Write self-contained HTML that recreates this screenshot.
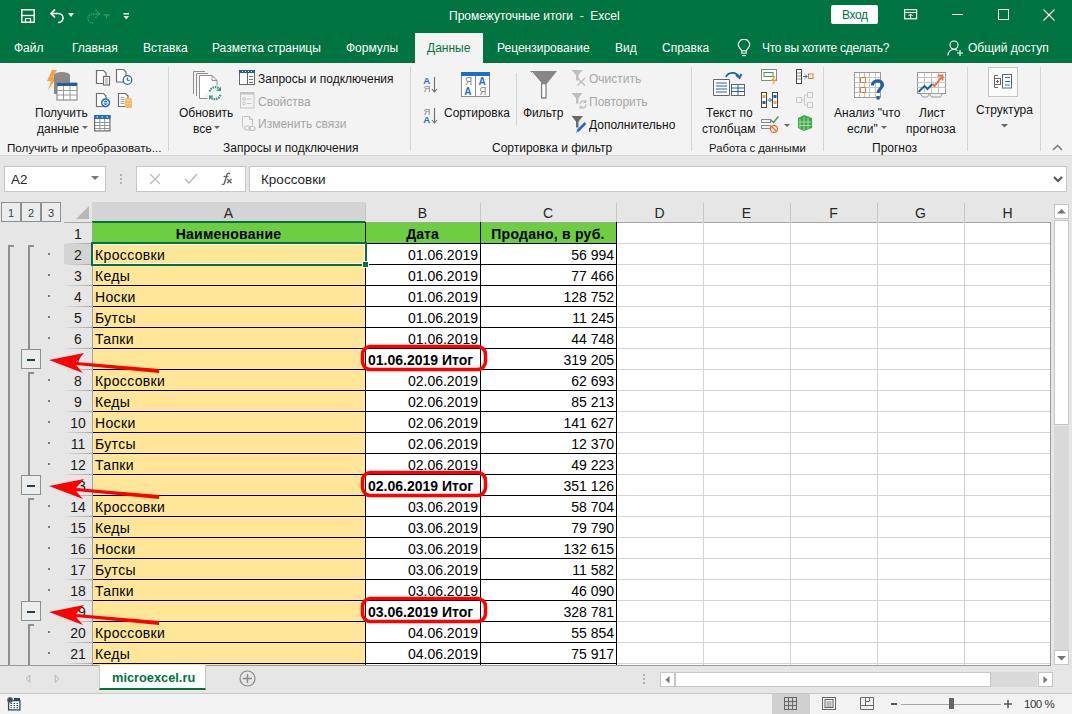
<!DOCTYPE html>
<html><head><meta charset="utf-8">
<style>
*{box-sizing:border-box}
html,body{margin:0;padding:0;width:1072px;height:714px;overflow:hidden;background:#e6e6e6;font-family:"Liberation Sans",sans-serif}
.a{position:absolute}
.t{position:absolute;white-space:pre;font-size:12px;line-height:14px;color:#141414}
#title{left:0;top:0;width:1072px;height:63px;background:#007440}
.tab{position:absolute;top:41px;white-space:pre;font-size:12px;line-height:15px;color:#fff}
#ribbon{left:0;top:63px;width:1072px;height:93px;background:#f3f3f3;border-bottom:1px solid #d6d6d6}
.sep{position:absolute;top:67px;width:1px;height:84px;background:#d4d4d4}
.gl{position:absolute;height:1px;background:#d4d4d4}
.gv{position:absolute;width:1px;background:#d4d4d4}
.bl{position:absolute;height:1px;background:#000}
.bv{position:absolute;width:1px;background:#000}
.ct{position:absolute;white-space:pre;font-size:14px;line-height:20px;height:20px;color:#000}
.ct.b{font-weight:bold}
.ct.r{text-align:right}
.rhn{position:absolute;left:64px;width:28px;height:20px;font-size:14px;line-height:20px;text-align:center;color:#1a1a1a}
.rhl{position:absolute;left:64px;width:28px;height:1px;background:linear-gradient(to right,#e6e6e6,#c8c8c8 40%,#a8a8a8)}
.obar{position:absolute;width:2px;background:#8a9190}
.odot{position:absolute;left:48px;width:2px;height:2px;background:#7a7a7a}
.obtn{position:absolute;left:21px;width:20px;height:20px;border:1px solid #8a9190;background:#ececec}
.obtn i{position:absolute;left:5px;top:9px;width:8px;height:2px;background:#1f3f4f}
.ch{position:absolute;top:203px;height:20px;font-size:14px;line-height:20px;text-align:center;color:#262626}
.chs{position:absolute;top:203px;width:1px;height:19px;background:#c6c6c6}
</style></head><body>
<!-- title bar + tabs -->
<div id="title" class="a"></div>
<!-- QAT icons -->
<svg class="a" style="left:20px;top:8px" width="16" height="16" viewBox="0 0 16 16"><path d="M1.75 1.75h12.5v12.5h-12.5z" fill="none" stroke="#fff" stroke-width="1.5"/><path d="M2 7.5h12" stroke="#fff" stroke-width="1.3"/><path d="M5.5 14v-3.5h5v3.5" fill="none" stroke="#fff" stroke-width="1.2"/></svg>
<svg class="a" style="left:49px;top:7px" width="18" height="17" viewBox="0 0 18 17"><path d="M2.5 6.5h7a4.5 4.5 0 0 1 0 9h-0.5" fill="none" stroke="#fff" stroke-width="1.7"/><path d="M6 2.5l-4 4 4 4" fill="none" stroke="#fff" stroke-width="1.7"/></svg>
<svg class="a" style="left:68px;top:13px" width="7" height="5"><path d="M0 0h6l-3 4z" fill="#fff"/></svg>
<svg class="a" style="left:84px;top:8px" width="18" height="16" viewBox="0 0 18 16"><path d="M15.5 6h-7a4.5 4.5 0 0 0 0 9h0.5" fill="none" stroke="#3a9e7a" stroke-width="1.3" stroke-dasharray="1.5 1"/><path d="M11.5 2l4 4-4 4" fill="none" stroke="#3a9e7a" stroke-width="1.3" stroke-dasharray="1.5 1"/></svg>
<svg class="a" style="left:103px;top:14px" width="7" height="5"><path d="M0.5 0.8h6M3.5 0.8v3.5" stroke="#3a9e7a" stroke-width="1.2"/></svg>
<svg class="a" style="left:122px;top:12px" width="8" height="9"><rect x="1.5" y="1" width="5.5" height="1.5" fill="#fff"/><path d="M1.5 4h5.5l-2.75 3.5z" fill="#fff"/></svg>
<div class="t" style="left:449px;top:9px;color:#fff;font-size:12px">Промежуточные итоги  -  Excel</div>
<div class="a" style="left:831px;top:5px;width:47px;height:19px;background:#fff;border-radius:2px"></div>
<div class="t" style="left:842px;top:8px;color:#007440;letter-spacing:-0.4px">Вход</div>
<svg class="a" style="left:904px;top:9px" width="14" height="11" viewBox="0 0 14 11"><rect x="0.6" y="0.6" width="12" height="9.2" fill="none" stroke="#fff" stroke-width="1.2"/><path d="M0.6 3.5h12" stroke="#fff" stroke-width="1.1"/><path d="M6.6 10V5M4.6 7l2-2 2 2" fill="none" stroke="#fff" stroke-width="1"/></svg>
<div class="a" style="left:952px;top:14px;width:11px;height:1px;background:#fff"></div>
<div class="a" style="left:998px;top:9px;width:11px;height:11px;border:1px solid #fff"></div>
<svg class="a" style="left:1043px;top:9px" width="12" height="12"><path d="M0.5 0.5l11 11M11.5 0.5l-11 11" stroke="#fff" stroke-width="1.1"/></svg>

<div class="a" style="left:415px;top:33px;width:68px;height:30px;background:#f3f3f3"></div>
<div class="tab" style="left:14px">Файл</div>
<div class="tab" style="left:72px">Главная</div>
<div class="tab" style="left:143px">Вставка</div>
<div class="tab" style="left:212px">Разметка страницы</div>
<div class="tab" style="left:346px">Формулы</div>
<div class="tab" style="left:427px;color:#007440">Данные</div>
<div class="tab" style="left:497px">Рецензирование</div>
<div class="tab" style="left:615px">Вид</div>
<div class="tab" style="left:662px">Справка</div>
<svg class="a" style="left:737px;top:39px" width="14" height="18" viewBox="0 0 14 18"><path d="M4.6 11.8C4.2 9.8 1.3 8.8 1.3 5.8a5.7 5.7 0 0 1 11.4 0c0 3-2.9 4-3.3 6z" fill="none" stroke="#fff" stroke-width="1.1"/><path d="M4.8 11.8v2.4h4.4v-2.4" fill="none" stroke="#fff" stroke-width="1.1"/><path d="M5 16.6h4" stroke="#fff" stroke-width="1.1"/></svg>
<div class="tab" style="left:762px;letter-spacing:-0.25px">Что вы хотите сделать?</div>
<svg class="a" style="left:947px;top:40px" width="17" height="16" viewBox="0 0 17 16"><circle cx="7" cy="5" r="4" fill="none" stroke="#fff" stroke-width="1.1"/><path d="M0.8 15.5c0.5-3.5 3-6 6.2-6 1.5 0 2.5 0.4 3.5 1" fill="none" stroke="#fff" stroke-width="1.1"/><path d="M13 10v6M10 13h6" stroke="#fff" stroke-width="1.1"/></svg>
<div class="tab" style="left:968px">Общий доступ</div>

<!-- ribbon -->
<div id="ribbon" class="a"></div>
<div class="sep" style="left:168px"></div>
<div class="sep" style="left:410px"></div>
<div class="sep" style="left:691px"></div>
<div class="sep" style="left:823px"></div>
<div class="sep" style="left:967px"></div>
<div class="sep" style="left:1040px"></div>
<div class="a" style="left:516px;top:73px;width:1px;height:53px;background:#d4d4d4"></div>

<!-- group labels -->
<div class="t" style="left:7px;top:141px;font-size:11.65px">Получить и преобразовать...</div>
<div class="t" style="left:223px;top:141px">Запросы и подключения</div>
<div class="t" style="left:492px;top:141px">Сортировка и фильтр</div>
<div class="t" style="left:709px;top:141px;font-size:11.3px">Работа с данными</div>
<div class="t" style="left:872px;top:141px">Прогноз</div>

<!-- group 1 -->
<svg class="a" style="left:44px;top:68px" width="36" height="34" viewBox="0 0 36 34"><path d="M8 2h5l-4 7h4L4 22l3-9H3z" fill="#f7a23a"/><ellipse cx="18" cy="7" rx="8" ry="3" fill="#8a8a8a"/><rect x="10" y="7" width="16" height="19" fill="#8a8a8a"/><rect x="13" y="15" width="20" height="17" fill="#fff" stroke="#7a7a7a"/><rect x="13" y="15" width="20" height="3" fill="#1e5fa8"/><path d="M13 22.5h20M13 27h20M19.5 18v14M26 18v14" stroke="#9a9a9a"/></svg>
<div class="t" style="left:35px;top:106px">Получить</div>
<div class="t" style="left:37px;top:122px">данные</div>
<svg class="a" style="left:82px;top:126px" width="6" height="4"><path d="M0 0h6l-3 3z" fill="#666"/></svg>
<svg class="a" style="left:95px;top:69px" width="16" height="17" viewBox="0 0 16 17"><path d="M1.5 1.5h7l2.5 2.5v10.5h-9.5z" fill="#fff" stroke="#6d6d6d" stroke-width="1.2"/><rect x="8.5" y="7.5" width="6" height="8.5" fill="#fff" stroke="#6d6d6d" stroke-width="1.2"/><path d="M10 10h3M10 12h3M10 14h3" stroke="#8a8a8a" stroke-width="0.9"/></svg>
<svg class="a" style="left:115px;top:68px" width="18" height="17" viewBox="0 0 18 17"><path d="M1.5 1.5h7l2.5 2.5v10h-9.5z" fill="#fff" stroke="#6d6d6d" stroke-width="1.2"/><circle cx="12.5" cy="12" r="4.3" fill="#fff" stroke="#1e72c8" stroke-width="1.3"/><path d="M12.3 9.5v2.8h2.2" fill="none" stroke="#444" stroke-width="1"/></svg>
<svg class="a" style="left:95px;top:92px" width="18" height="17" viewBox="0 0 18 17"><path d="M1.5 1.5h7l2.5 2.5v10.5h-9.5z" fill="#fff" stroke="#6d6d6d" stroke-width="1.2"/><circle cx="10.6" cy="10.8" r="4.6" fill="#1e6fc4"/><circle cx="10.6" cy="10.8" r="2.6" fill="none" stroke="#fff" stroke-width="1"/><path d="M7.5 10.8h6.2" stroke="#fff" stroke-width="1"/></svg>
<svg class="a" style="left:117px;top:92px" width="16" height="17" viewBox="0 0 16 17"><path d="M1.5 1.5h7l2.5 2.5v10.5h-9.5z" fill="#fff" stroke="#6d6d6d" stroke-width="1.2"/><path d="M3.5 5.5h4M3.5 7.5h4M3.5 9.5h4M3.5 11.5h4" stroke="#999" stroke-width="0.9"/><rect x="8" y="6" width="7" height="10" rx="1.5" fill="#f9b862"/><path d="M8.5 8.5h6M8.5 11.5h6" stroke="#fcd9a8" stroke-width="0.8"/></svg>
<svg class="a" style="left:94px;top:115px" width="17" height="17" viewBox="0 0 17 17"><rect x="0.6" y="0.6" width="15.3" height="15.3" fill="#fff" stroke="#6d6d6d" stroke-width="1.2"/><rect x="0" y="0" width="16.5" height="4" fill="#1e6fc4"/><path d="M2.5 2h1.5M7.5 2h1.5M12.5 2h1.5" stroke="#fff" stroke-width="1"/><path d="M1 7.5h15M1 10.5h15M1 13.5h15M5.8 4v12M10.7 4v12" stroke="#8a8a8a" stroke-width="0.9"/></svg>

<!-- group 2 -->
<svg class="a" style="left:192px;top:70px" width="32" height="32" viewBox="0 0 32 32"><path d="M1.5 24V1.5H13" fill="none" stroke="#8f8f8f"/><path d="M4.5 26V3.5H16" fill="none" stroke="#8f8f8f"/><path d="M7.5 28.5V5.5H20l5 5v5" fill="#fff" stroke="#8f8f8f"/><path d="M7.5 28.5h8" stroke="#8f8f8f"/><path d="M20 5.5v5h5" fill="none" stroke="#8f8f8f"/><path d="M17.6 21.5a5.8 5.8 0 0 1 10.2-2.2" fill="none" stroke="#3a9a80" stroke-width="2.2" stroke-dasharray="1.6 0.8"/><path d="M28.4 24.8a5.8 5.8 0 0 1-10.2 2.2" fill="none" stroke="#3a9a80" stroke-width="2.2" stroke-dasharray="1.6 0.8"/><path d="M29 16.5v4.5h-4.5z" fill="#3a9a80"/><path d="M17 30v-4.5h4.5z" fill="#3a9a80"/></svg>
<div class="t" style="left:179px;top:106px">Обновить</div>
<div class="t" style="left:193px;top:122px">все</div>
<svg class="a" style="left:214px;top:126px" width="6" height="4"><path d="M0 0h6l-3 3z" fill="#666"/></svg>
<svg class="a" style="left:239px;top:70px" width="17" height="16" viewBox="0 0 17 16"><rect x="0.5" y="0.5" width="15" height="14" fill="#fff" stroke="#666"/><rect x="0" y="0" width="16" height="3" fill="#1e5fa8"/><path d="M3 1.5h1M6 1.5h1M9 1.5h1M12 1.5h1" stroke="#fff"/><path d="M8.5 3v11.5" stroke="#666"/><path d="M10 6.5h4M10 9.5h4M10 12.5h4" stroke="#777"/></svg>
<div class="t" style="left:258px;top:72px">Запросы и подключения</div>
<svg class="a" style="left:239px;top:92px" width="16" height="17" viewBox="0 0 16 17"><rect x="1.5" y="0.5" width="13.5" height="15.5" fill="none" stroke="#c4c4c4"/><rect x="1.5" y="0.5" width="13.5" height="2" fill="#c4c4c4"/><circle cx="5" cy="7" r="1.4" fill="none" stroke="#c4c4c4"/><circle cx="5" cy="11.5" r="1.4" fill="none" stroke="#c4c4c4"/><path d="M8 7h4.5M8 11.5h4.5" stroke="#c4c4c4"/></svg>
<div class="t" style="left:258px;top:95px;color:#a6a6a6">Свойства</div>
<svg class="a" style="left:241px;top:115px" width="16" height="17" viewBox="0 0 16 17"><path d="M1.5 12.5V1.5h7l3 3v6" fill="none" stroke="#c4c4c4"/><path d="M8.5 1.5v3h3" fill="none" stroke="#c4c4c4"/><rect x="3.5" y="11" width="6" height="4" rx="2" fill="none" stroke="#c4c4c4" stroke-width="1.2"/><rect x="8" y="11.5" width="6" height="4" rx="2" fill="none" stroke="#c4c4c4" stroke-width="1.2"/></svg>
<div class="t" style="left:258px;top:117px;color:#a6a6a6">Изменить связи</div>

<!-- group 3 -->
<svg class="a" style="left:422px;top:75px" width="16" height="19" viewBox="0 0 16 19"><text x="1.3" y="9" font-family="Liberation Sans" font-weight="bold" font-size="9.6" fill="#1e6fc4">A</text><text x="1.5" y="16.8" font-family="Liberation Sans" font-size="9.6" fill="#8a8a8a">Я</text><path d="M12.5 2v15M10 14l2.5 3 2.5-3" fill="none" stroke="#6d6d6d" stroke-width="1.1"/></svg>
<svg class="a" style="left:422px;top:106px" width="16" height="19" viewBox="0 0 16 19"><text x="1.5" y="8.6" font-family="Liberation Sans" font-size="9.6" fill="#8a8a8a">Я</text><text x="1.3" y="16.8" font-family="Liberation Sans" font-weight="bold" font-size="9.6" fill="#1e6fc4">A</text><path d="M12.5 2v15M10 14l2.5 3 2.5-3" fill="none" stroke="#6d6d6d" stroke-width="1.1"/></svg>
<svg class="a" style="left:461px;top:72px" width="30" height="26" viewBox="0 0 30 26"><rect x="0.5" y="0.5" width="28" height="24" fill="#fff" stroke="#8a8a8a"/><rect x="0" y="0" width="29" height="4" fill="#1e6fc4"/><path d="M14.5 4v20.5" stroke="#8a8a8a"/><text x="4" y="13" font-family="Liberation Sans" font-size="10" fill="#8a8a8a">Я</text><text x="3.3" y="22.5" font-family="Liberation Sans" font-weight="bold" font-size="10" fill="#1e6fc4">A</text><text x="17.5" y="13" font-family="Liberation Sans" font-weight="bold" font-size="10" fill="#1e6fc4">A</text><text x="18.2" y="22.5" font-family="Liberation Sans" font-size="10" fill="#8a8a8a">Я</text></svg>
<div class="t" style="left:444px;top:106px">Сортировка</div>
<svg class="a" style="left:529px;top:70px" width="30" height="29" viewBox="0 0 30 29"><path d="M1 1h27l-10 12.5h-5z" fill="#868686"/><path d="M3 2l9.5 12" stroke="#fff" stroke-width="1"/><path d="M12.6 13.5h4.4v14.5h-4.4z" fill="#fff" stroke="#808080" stroke-width="1.3"/></svg>
<div class="t" style="left:523px;top:106px">Фильтр</div>
<svg class="a" style="left:571px;top:69px" width="18" height="18" viewBox="0 0 18 18"><path d="M0.5 1h11l-4 5v5.5h-2.5v-5.5z" fill="#bdbdbd"/><path d="M6.5 9l7.5 7.5M14 9l-7.5 7.5" stroke="#bdbdbd" stroke-width="1.3"/></svg>
<div class="t" style="left:589px;top:72px;color:#a6a6a6">Очистить</div>
<svg class="a" style="left:571px;top:92px" width="18" height="18" viewBox="0 0 18 18"><path d="M0.5 1h11l-4 5v5.5h-2.5v-5.5z" fill="#bdbdbd"/><path d="M9 12.5a3.5 3.5 0 0 1 6-2.5M15 12.5a3.5 3.5 0 0 1-6 2.5" fill="none" stroke="#bdbdbd" stroke-width="1.3"/><path d="M15 8v2.5h-2.5M9 17v-2.5h2.5" fill="none" stroke="#bdbdbd" stroke-width="1"/></svg>
<div class="t" style="left:589px;top:95px;color:#a6a6a6">Повторить</div>
<svg class="a" style="left:571px;top:115px" width="18" height="18" viewBox="0 0 18 18"><path d="M0.5 1h11.5l-4.5 5.5v6h-2.5v-6z" fill="#6b6b66"/><path d="M6.5 16l8-8" stroke="#1e6fc4" stroke-width="2.6"/><path d="M5.5 17.5l1-2" stroke="#1e6fc4" stroke-width="1"/></svg>
<div class="t" style="left:589px;top:118px">Дополнительно</div>

<!-- group 4 -->
<svg class="a" style="left:712px;top:70px" width="34" height="27" viewBox="0 0 34 27"><path d="M1.5 9.5h16v16h-16z" fill="#fff" stroke="#666"/><path d="M4 13h11M4 16h11M4 19h11M4 22h11" stroke="#1e5fa8"/><rect x="19.5" y="14.5" width="13" height="11" fill="#fff" stroke="#666"/><path d="M19.5 18h13M19.5 21.5h13M26 14.5v11" stroke="#1e5fa8"/><path d="M14 7c2-5 10-6 13 0" fill="none" stroke="#1e5fa8" stroke-width="1.8"/><path d="M24 5l3.5 3 2-4" fill="none" stroke="#1e5fa8" stroke-width="1.8"/></svg>
<div class="t" style="left:706px;top:106px">Текст по</div>
<div class="t" style="left:702px;top:122px">столбцам</div>
<svg class="a" style="left:761px;top:69px" width="18" height="16" viewBox="0 0 18 16"><rect x="0.5" y="0.5" width="15" height="11" fill="#fff" stroke="#888"/><rect x="3" y="3.5" width="9" height="4" fill="#fff" stroke="#3f9a5a"/><path d="M14 7l-3 4h3l-2 4" fill="none" stroke="#f7a23a" stroke-width="1.3"/></svg>
<svg class="a" style="left:761px;top:92px" width="18" height="17" viewBox="0 0 18 17"><rect x="0.5" y="0.5" width="5" height="15" fill="#fff" stroke="#444"/><rect x="11.5" y="0.5" width="5" height="15" fill="#fff" stroke="#444"/><rect x="1.5" y="3" width="3" height="3" fill="#f7a23a"/><rect x="1.5" y="9" width="3" height="3" fill="#1e5fa8"/><rect x="12.5" y="3" width="3" height="3" fill="#1e5fa8"/><rect x="12.5" y="9" width="3" height="3" fill="#f7a23a"/><path d="M6.5 8h4M8.5 6l2 2-2 2" fill="none" stroke="#1e72c8"/></svg>
<svg class="a" style="left:761px;top:115px" width="18" height="18" viewBox="0 0 18 18"><rect x="0.5" y="4.5" width="9" height="3" fill="none" stroke="#888"/><rect x="0.5" y="10.5" width="9" height="3" fill="none" stroke="#888"/><path d="M10 5l2.5 2.5 5-6" fill="none" stroke="#3f9a5a" stroke-width="1.4"/><circle cx="13" cy="14" r="3.5" fill="none" stroke="#e8743b" stroke-width="1.3"/><path d="M10.5 11.5l5 5" stroke="#e8743b" stroke-width="1.3"/></svg>
<svg class="a" style="left:784px;top:124px" width="6" height="4"><path d="M0 0h6l-3 3z" fill="#666"/></svg>
<svg class="a" style="left:796px;top:69px" width="18" height="16" viewBox="0 0 18 16"><rect x="0.5" y="0.5" width="5" height="14" fill="#fff" stroke="#444"/><path d="M1 4h4M1 7h4M1 10h4" stroke="#888"/><path d="M7 7.5h4M9 5.5l2 2-2 2" fill="none" stroke="#1e72c8"/><rect x="12.5" y="5" width="4.5" height="4.5" fill="#fff" stroke="#e8743b"/></svg>
<svg class="a" style="left:796px;top:92px" width="18" height="17" viewBox="0 0 18 17"><rect x="0.5" y="5.5" width="5" height="5" fill="none" stroke="#c8c8c8"/><rect x="11.5" y="0.5" width="5" height="5" fill="none" stroke="#c8c8c8"/><rect x="11.5" y="10.5" width="5" height="5" fill="none" stroke="#c8c8c8"/><path d="M5.5 8h3M8.5 3v10M8.5 3h3M8.5 13h3" fill="none" stroke="#c8c8c8"/></svg>
<svg class="a" style="left:796px;top:114px" width="18" height="18" viewBox="0 0 18 18"><path d="M2 4l6-3 8 3v10l-8 3-6-3z" fill="#3fa84a"/><path d="M4 5v9M8 3v13M12 4v11M3 8h12M3 11.5h12" stroke="#b8e8b8" stroke-width="0.8"/></svg>

<!-- group 5 -->
<svg class="a" style="left:854px;top:72px" width="32" height="30" viewBox="0 0 32 30"><rect x="0.5" y="0.5" width="26" height="25" fill="#fff" stroke="#999"/><path d="M0.5 5.5h26M0.5 10.5h26M0.5 15.5h26M0.5 20.5h26M5.5 0.5v25M10.5 0.5v25M15.5 0.5v25M21.5 0.5v25" stroke="#c4c4c4"/><path d="M0.5 0.5h26v25h-26z" fill="none" stroke="#999"/><rect x="6.5" y="5.5" width="5" height="5" fill="#fff" stroke="#e8743b"/><rect x="6.5" y="15.5" width="5" height="5" fill="#fff" stroke="#e8743b"/><path d="M18.5 13.5c0-6 10-6 10 -0.5c0 3.5-4.5 4-4.5 8" fill="none" stroke="#1e5fa8" stroke-width="3.2"/><rect x="22.5" y="24" width="3.2" height="3.5" fill="#1e5fa8"/></svg>
<div class="t" style="left:834px;top:106px">Анализ "что</div>
<div class="t" style="left:847px;top:122px">если"</div>
<svg class="a" style="left:881px;top:126px" width="6" height="4"><path d="M0 0h6l-3 3z" fill="#666"/></svg>
<svg class="a" style="left:917px;top:72px" width="30" height="27" viewBox="0 0 30 27"><rect x="0.5" y="0.5" width="28" height="21" fill="#fff" stroke="#999"/><path d="M0.5 5.5h28M0.5 10.5h28M0.5 15.5h28M7.5 0.5v21M14.5 0.5v21M21.5 0.5v21" stroke="#c4c4c4"/><path d="M1.5 20l6-6 3 3 5-5" fill="none" stroke="#1e5fa8" stroke-width="2"/><path d="M15.5 12l2 2 7.5-9.5" fill="none" stroke="#e8743b" stroke-width="2"/><path d="M20.5 3.5h5v5" fill="none" stroke="#e8743b" stroke-width="2"/><path d="M3.5 21.5l2 3.5h5l2-3.5M12.5 21.5l2 3.5h9l2-3.5" fill="none" stroke="#999"/></svg>
<div class="t" style="left:919px;top:106px">Лист</div>
<div class="t" style="left:906px;top:122px">прогноза</div>

<!-- group 6 -->
<div class="a" style="left:988px;top:67px;width:30px;height:30px;border:1px solid #c6c6c6;background:#fafafa"></div>
<svg class="a" style="left:994px;top:74px" width="19" height="15" viewBox="0 0 19 15"><path d="M4 1.5H0.5v12H4" fill="none" stroke="#666"/><rect x="0.5" y="4.5" width="6" height="6" fill="#fff" stroke="#666"/><path d="M2 7.5h3M3.5 6v3" stroke="#666"/><rect x="8.5" y="0.5" width="9" height="13.5" fill="#fff" stroke="#666"/><path d="M11 3.5h5M11 7.5h5M11 11h5" stroke="#1e72c8" stroke-width="1.2"/></svg>
<div class="t" style="left:976px;top:103px">Структура</div>
<svg class="a" style="left:1001px;top:124px" width="7" height="4"><path d="M0 0h7l-3.5 3.5z" fill="#666"/></svg>
<svg class="a" style="left:1052px;top:144px" width="11" height="7"><path d="M1 6l4.5-4.5L10 6" fill="none" stroke="#777" stroke-width="1.5"/></svg>

<!-- formula bar -->
<div class="a" style="left:4px;top:166px;width:102px;height:26px;border:1px solid #c6c6c6;background:#fff"></div>
<div class="t" style="left:11px;top:173px;font-size:13.5px;color:#262626">A2</div>
<svg class="a" style="left:91px;top:176px" width="8" height="5"><path d="M0 0h8l-4 4z" fill="#777"/></svg>
<div class="a" style="left:120px;top:174px;width:2px;height:2px;background:#b0b0b0"></div>
<div class="a" style="left:120px;top:178px;width:2px;height:2px;background:#b0b0b0"></div>
<div class="a" style="left:120px;top:182px;width:2px;height:2px;background:#b0b0b0"></div>
<div class="a" style="left:136px;top:166px;width:110px;height:26px;border:1px solid #c6c6c6;background:#fff"></div>
<svg class="a" style="left:149px;top:173px" width="12" height="12"><path d="M1 1l10 10M11 1l-10 10" stroke="#b8b8b8" stroke-width="1.2"/></svg>
<svg class="a" style="left:184px;top:173px" width="14" height="12"><path d="M1 6l4 4 8-9" fill="none" stroke="#b8b8b8" stroke-width="1.5"/></svg>
<svg class="a" style="left:220px;top:172px" width="14" height="14" viewBox="0 0 14 14"><path d="M10 1.8C8.6 0.9 7.3 1.3 6.8 2.8L4.6 10.8C4.2 12.4 3 12.8 1.8 12" fill="none" stroke="#666" stroke-width="1.4"/><path d="M3.5 4.5h5" stroke="#666" stroke-width="1.3"/><path d="M7.2 7l4.3 4.3M11.5 7l-4.3 4.3" stroke="#666" stroke-width="1.3"/></svg>
<div class="a" style="left:249px;top:166px;width:818px;height:26px;border:1px solid #c6c6c6;background:#fff"></div>
<div class="t" style="left:261px;top:173px;font-size:13.5px;color:#262626">Кроссовки</div>
<svg class="a" style="left:1053px;top:176px" width="10" height="7"><path d="M1 1l4 4 4-4" fill="none" stroke="#555" stroke-width="2"/></svg>

<!-- outline level buttons -->
<div class="a" style="left:1px;top:202px;width:20px;height:20px;border:1px solid #8a9190;background:#ececec;font-size:11px;line-height:21px;text-align:center;color:#2a4552">1</div>
<div class="a" style="left:21px;top:202px;width:20px;height:20px;border:1px solid #8a9190;background:#ececec;font-size:11px;line-height:21px;text-align:center;color:#2a4552">2</div>
<div class="a" style="left:41px;top:202px;width:20px;height:20px;border:1px solid #8a9190;background:#ececec;font-size:11px;line-height:21px;text-align:center;color:#2a4552">3</div>

<!-- column headers -->
<div class="a" style="left:64px;top:202px;width:987px;height:20px;background:#e6e6e6"></div>
<svg class="a" style="left:76px;top:206px" width="14" height="14"><path d="M13 0v13H0z" fill="#b8b8b8"/></svg>
<div class="a" style="left:92px;top:202px;width:273px;height:19px;background:#d4d4d4"></div>
<div class="a" style="left:64px;top:222px;width:28px;height:1px;background:#a8a8a8"></div>
<div class="a" style="left:92px;top:221px;width:274px;height:2px;background:#007440"></div>
<div class="a" style="left:366px;top:222px;width:685px;height:1px;background:#a6a6a6"></div>
<div class="chs" style="left:365px"></div><div class="chs" style="left:480px"></div><div class="chs" style="left:616px"></div><div class="chs" style="left:703px"></div><div class="chs" style="left:790px"></div><div class="chs" style="left:877px"></div><div class="chs" style="left:964px"></div>
<div class="ch" style="left:92px;width:273px">A</div>
<div class="ch" style="left:365px;width:115px">B</div>
<div class="ch" style="left:480px;width:136px">C</div>
<div class="ch" style="left:616px;width:87px">D</div>
<div class="ch" style="left:703px;width:87px">E</div>
<div class="ch" style="left:790px;width:87px">F</div>
<div class="ch" style="left:877px;width:87px">G</div>
<div class="ch" style="left:964px;width:87px">H</div>

<!-- row headers -->
<div class="rhn" style="top:223px;"><span style="position:relative;top:1px">1</span></div>
<div class="rhl" style="top:243px"></div>
<div class="rhn" style="top:244px;background:#d4d4d4;"><span style="position:relative;top:1px">2</span></div>
<div class="rhl" style="top:264px"></div>
<div class="rhn" style="top:265px;"><span style="position:relative;top:1px">3</span></div>
<div class="rhl" style="top:285px"></div>
<div class="rhn" style="top:286px;"><span style="position:relative;top:1px">4</span></div>
<div class="rhl" style="top:306px"></div>
<div class="rhn" style="top:307px;"><span style="position:relative;top:1px">5</span></div>
<div class="rhl" style="top:327px"></div>
<div class="rhn" style="top:328px;"><span style="position:relative;top:1px">6</span></div>
<div class="rhl" style="top:348px"></div>
<div class="rhn" style="top:349px;"><span style="position:relative;top:1px">7</span></div>
<div class="rhl" style="top:369px"></div>
<div class="rhn" style="top:370px;"><span style="position:relative;top:1px">8</span></div>
<div class="rhl" style="top:390px"></div>
<div class="rhn" style="top:391px;"><span style="position:relative;top:1px">9</span></div>
<div class="rhl" style="top:411px"></div>
<div class="rhn" style="top:412px;"><span style="position:relative;top:1px">10</span></div>
<div class="rhl" style="top:432px"></div>
<div class="rhn" style="top:433px;"><span style="position:relative;top:1px">11</span></div>
<div class="rhl" style="top:453px"></div>
<div class="rhn" style="top:454px;"><span style="position:relative;top:1px">12</span></div>
<div class="rhl" style="top:474px"></div>
<div class="rhn" style="top:475px;"><span style="position:relative;top:1px">13</span></div>
<div class="rhl" style="top:495px"></div>
<div class="rhn" style="top:496px;"><span style="position:relative;top:1px">14</span></div>
<div class="rhl" style="top:516px"></div>
<div class="rhn" style="top:517px;"><span style="position:relative;top:1px">15</span></div>
<div class="rhl" style="top:537px"></div>
<div class="rhn" style="top:538px;"><span style="position:relative;top:1px">16</span></div>
<div class="rhl" style="top:558px"></div>
<div class="rhn" style="top:559px;"><span style="position:relative;top:1px">17</span></div>
<div class="rhl" style="top:579px"></div>
<div class="rhn" style="top:580px;"><span style="position:relative;top:1px">18</span></div>
<div class="rhl" style="top:600px"></div>
<div class="rhn" style="top:601px;"><span style="position:relative;top:1px">19</span></div>
<div class="rhl" style="top:621px"></div>
<div class="rhn" style="top:622px;"><span style="position:relative;top:1px">20</span></div>
<div class="rhl" style="top:642px"></div>
<div class="rhn" style="top:643px;"><span style="position:relative;top:1px">21</span></div>
<div class="rhl" style="top:663px"></div>
<!-- outline -->
<div class="obar" style="left:8px;top:245px;height:420px"></div>
<div class="obar" style="left:8px;top:245px;width:6px;height:2px"></div>
<div class="obar" style="left:28px;top:245px;height:104px"></div>
<div class="obtn" style="top:349px"><i></i></div>
<div class="obar" style="left:28px;top:245px;width:6px;height:2px"></div>
<div class="odot" style="top:253px"></div>
<div class="odot" style="top:274px"></div>
<div class="odot" style="top:295px"></div>
<div class="odot" style="top:316px"></div>
<div class="odot" style="top:337px"></div>
<div class="obar" style="left:28px;top:372px;height:103px"></div>
<div class="obtn" style="top:475px"><i></i></div>
<div class="obar" style="left:28px;top:372px;width:6px;height:2px"></div>
<div class="odot" style="top:379px"></div>
<div class="odot" style="top:400px"></div>
<div class="odot" style="top:421px"></div>
<div class="odot" style="top:442px"></div>
<div class="odot" style="top:463px"></div>
<div class="obar" style="left:28px;top:498px;height:103px"></div>
<div class="obtn" style="top:601px"><i></i></div>
<div class="obar" style="left:28px;top:498px;width:6px;height:2px"></div>
<div class="odot" style="top:505px"></div>
<div class="odot" style="top:526px"></div>
<div class="odot" style="top:547px"></div>
<div class="odot" style="top:568px"></div>
<div class="odot" style="top:589px"></div>
<div class="obar" style="left:28px;top:624px;height:41px"></div>
<div class="obar" style="left:28px;top:624px;width:6px;height:2px"></div>
<div class="odot" style="top:631px"></div>
<div class="odot" style="top:652px"></div>

<!-- grid -->
<div style="position:absolute;left:92px;top:223px;width:958px;height:442px;background:#fff"></div>
<div class="gl" style="left:616px;top:243px;width:434px"></div>
<div class="gl" style="left:616px;top:264px;width:434px"></div>
<div class="gl" style="left:616px;top:285px;width:434px"></div>
<div class="gl" style="left:616px;top:306px;width:434px"></div>
<div class="gl" style="left:616px;top:327px;width:434px"></div>
<div class="gl" style="left:616px;top:348px;width:434px"></div>
<div class="gl" style="left:616px;top:369px;width:434px"></div>
<div class="gl" style="left:616px;top:390px;width:434px"></div>
<div class="gl" style="left:616px;top:411px;width:434px"></div>
<div class="gl" style="left:616px;top:432px;width:434px"></div>
<div class="gl" style="left:616px;top:453px;width:434px"></div>
<div class="gl" style="left:616px;top:474px;width:434px"></div>
<div class="gl" style="left:616px;top:495px;width:434px"></div>
<div class="gl" style="left:616px;top:516px;width:434px"></div>
<div class="gl" style="left:616px;top:537px;width:434px"></div>
<div class="gl" style="left:616px;top:558px;width:434px"></div>
<div class="gl" style="left:616px;top:579px;width:434px"></div>
<div class="gl" style="left:616px;top:600px;width:434px"></div>
<div class="gl" style="left:616px;top:621px;width:434px"></div>
<div class="gl" style="left:616px;top:642px;width:434px"></div>
<div class="gl" style="left:616px;top:663px;width:434px"></div>
<div class="gv" style="left:703px;top:222px;height:443px"></div>
<div class="gv" style="left:790px;top:222px;height:443px"></div>
<div class="gv" style="left:877px;top:222px;height:443px"></div>
<div class="gv" style="left:964px;top:222px;height:443px"></div>
<div style="position:absolute;left:92px;top:243px;width:273px;height:422px;background:#ffe699"></div>
<div style="position:absolute;left:92px;top:223px;width:524px;height:20px;background:#6cce40"></div>
<div class="bl" style="left:92px;top:243px;width:525px"></div>
<div class="bl" style="left:92px;top:264px;width:525px"></div>
<div class="bl" style="left:92px;top:285px;width:525px"></div>
<div class="bl" style="left:92px;top:306px;width:525px"></div>
<div class="bl" style="left:92px;top:327px;width:525px"></div>
<div class="bl" style="left:92px;top:348px;width:525px"></div>
<div class="bl" style="left:92px;top:369px;width:525px"></div>
<div class="bl" style="left:92px;top:390px;width:525px"></div>
<div class="bl" style="left:92px;top:411px;width:525px"></div>
<div class="bl" style="left:92px;top:432px;width:525px"></div>
<div class="bl" style="left:92px;top:453px;width:525px"></div>
<div class="bl" style="left:92px;top:474px;width:525px"></div>
<div class="bl" style="left:92px;top:495px;width:525px"></div>
<div class="bl" style="left:92px;top:516px;width:525px"></div>
<div class="bl" style="left:92px;top:537px;width:525px"></div>
<div class="bl" style="left:92px;top:558px;width:525px"></div>
<div class="bl" style="left:92px;top:579px;width:525px"></div>
<div class="bl" style="left:92px;top:600px;width:525px"></div>
<div class="bl" style="left:92px;top:621px;width:525px"></div>
<div class="bl" style="left:92px;top:642px;width:525px"></div>
<div class="bl" style="left:92px;top:663px;width:525px"></div>
<div class="bv" style="left:365px;top:222px;height:443px"></div>
<div class="bv" style="left:480px;top:222px;height:443px"></div>
<div class="bv" style="left:616px;top:222px;height:443px"></div>
<div class="ct b" style="left:92px;top:224px;width:273px;text-align:center;letter-spacing:0.25px">Наименование</div>
<div class="ct b" style="left:365px;top:224px;width:115px;text-align:center">Дата</div>
<div class="ct b" style="left:480px;top:224px;width:136px;text-align:center;letter-spacing:0.25px">Продано, в руб.</div>
<div class="ct" style="left:95px;top:245px;letter-spacing:0.35px">Кроссовки</div>
<div class="ct r" style="left:365px;top:245px;width:113px">01.06.2019</div>
<div class="ct r" style="left:480px;top:245px;width:134px">56 994</div>
<div class="ct" style="left:95px;top:266px;letter-spacing:0.35px">Кеды</div>
<div class="ct r" style="left:365px;top:266px;width:113px">01.06.2019</div>
<div class="ct r" style="left:480px;top:266px;width:134px">77 466</div>
<div class="ct" style="left:95px;top:287px;letter-spacing:0.35px">Носки</div>
<div class="ct r" style="left:365px;top:287px;width:113px">01.06.2019</div>
<div class="ct r" style="left:480px;top:287px;width:134px">128 752</div>
<div class="ct" style="left:95px;top:308px;letter-spacing:0.35px">Бутсы</div>
<div class="ct r" style="left:365px;top:308px;width:113px">01.06.2019</div>
<div class="ct r" style="left:480px;top:308px;width:134px">11 245</div>
<div class="ct" style="left:95px;top:329px;letter-spacing:0.35px">Тапки</div>
<div class="ct r" style="left:365px;top:329px;width:113px">01.06.2019</div>
<div class="ct r" style="left:480px;top:329px;width:134px">44 748</div>
<div class="ct b" style="left:368px;top:350px">01.06.2019 Итог</div>
<div class="ct r" style="left:480px;top:350px;width:134px">319 205</div>
<div class="ct" style="left:95px;top:371px;letter-spacing:0.35px">Кроссовки</div>
<div class="ct r" style="left:365px;top:371px;width:113px">02.06.2019</div>
<div class="ct r" style="left:480px;top:371px;width:134px">62 693</div>
<div class="ct" style="left:95px;top:392px;letter-spacing:0.35px">Кеды</div>
<div class="ct r" style="left:365px;top:392px;width:113px">02.06.2019</div>
<div class="ct r" style="left:480px;top:392px;width:134px">85 213</div>
<div class="ct" style="left:95px;top:413px;letter-spacing:0.35px">Носки</div>
<div class="ct r" style="left:365px;top:413px;width:113px">02.06.2019</div>
<div class="ct r" style="left:480px;top:413px;width:134px">141 627</div>
<div class="ct" style="left:95px;top:434px;letter-spacing:0.35px">Бутсы</div>
<div class="ct r" style="left:365px;top:434px;width:113px">02.06.2019</div>
<div class="ct r" style="left:480px;top:434px;width:134px">12 370</div>
<div class="ct" style="left:95px;top:455px;letter-spacing:0.35px">Тапки</div>
<div class="ct r" style="left:365px;top:455px;width:113px">02.06.2019</div>
<div class="ct r" style="left:480px;top:455px;width:134px">49 223</div>
<div class="ct b" style="left:368px;top:476px">02.06.2019 Итог</div>
<div class="ct r" style="left:480px;top:476px;width:134px">351 126</div>
<div class="ct" style="left:95px;top:497px;letter-spacing:0.35px">Кроссовки</div>
<div class="ct r" style="left:365px;top:497px;width:113px">03.06.2019</div>
<div class="ct r" style="left:480px;top:497px;width:134px">58 704</div>
<div class="ct" style="left:95px;top:518px;letter-spacing:0.35px">Кеды</div>
<div class="ct r" style="left:365px;top:518px;width:113px">03.06.2019</div>
<div class="ct r" style="left:480px;top:518px;width:134px">79 790</div>
<div class="ct" style="left:95px;top:539px;letter-spacing:0.35px">Носки</div>
<div class="ct r" style="left:365px;top:539px;width:113px">03.06.2019</div>
<div class="ct r" style="left:480px;top:539px;width:134px">132 615</div>
<div class="ct" style="left:95px;top:560px;letter-spacing:0.35px">Бутсы</div>
<div class="ct r" style="left:365px;top:560px;width:113px">03.06.2019</div>
<div class="ct r" style="left:480px;top:560px;width:134px">11 582</div>
<div class="ct" style="left:95px;top:581px;letter-spacing:0.35px">Тапки</div>
<div class="ct r" style="left:365px;top:581px;width:113px">03.06.2019</div>
<div class="ct r" style="left:480px;top:581px;width:134px">46 090</div>
<div class="ct b" style="left:368px;top:602px">03.06.2019 Итог</div>
<div class="ct r" style="left:480px;top:602px;width:134px">328 781</div>
<div class="ct" style="left:95px;top:623px;letter-spacing:0.35px">Кроссовки</div>
<div class="ct r" style="left:365px;top:623px;width:113px">04.06.2019</div>
<div class="ct r" style="left:480px;top:623px;width:134px">55 854</div>
<div class="ct" style="left:95px;top:644px;letter-spacing:0.35px">Кеды</div>
<div class="ct r" style="left:365px;top:644px;width:113px">04.06.2019</div>
<div class="ct r" style="left:480px;top:644px;width:134px">75 917</div>
<div class="a" style="left:1050px;top:222px;width:1px;height:444px;background:#9a9a9a"></div>
<div class="a" style="left:92px;top:222px;width:1px;height:443px;background:#a0a0a0"></div>

<!-- selection -->
<div class="a" style="left:91px;top:242px;width:276px;height:24px;border:2px solid #007440"></div>
<div class="a" style="left:93px;top:244px;width:272px;height:20px;border:1px solid #fff"></div>
<div class="a" style="left:363px;top:262px;width:5px;height:5px;background:#007440;outline:1px solid #fff"></div>

<!-- vertical scrollbar -->
<div class="a" style="left:1051px;top:202px;width:21px;height:463px;background:#e6e6e6"></div>
<div class="a" style="left:1054px;top:204px;width:15px;height:15px;border:1px solid #c6c6c6;background:#fff"></div>
<svg class="a" style="left:1057px;top:209px" width="9" height="5"><path d="M0 4.5h9L4.5 0z" fill="#777"/></svg>
<div class="a" style="left:1054px;top:220px;width:15px;height:205px;border:1px solid #c6c6c6;background:#fff"></div>
<div class="a" style="left:1054px;top:426px;width:15px;height:224px;background:#d9d9d9"></div>
<div class="a" style="left:1054px;top:650px;width:15px;height:15px;border:1px solid #c6c6c6;background:#fff"></div>
<svg class="a" style="left:1057px;top:656px" width="9" height="5"><path d="M0 0h9L4.5 4.5z" fill="#777"/></svg>

<!-- sheet tabs bar -->
<div class="a" style="left:0;top:665px;width:1051px;height:1px;background:#9a9a9a"></div>
<div class="a" style="left:0;top:666px;width:1072px;height:28px;background:#e6e6e6;border-bottom:1px solid #c6c6c6"></div>
<svg class="a" style="left:25px;top:674px" width="6" height="10"><path d="M4.8 1v7.5L1 4.75z" fill="none" stroke="#b4b4b4" stroke-width="1"/></svg>
<svg class="a" style="left:54px;top:674px" width="6" height="10"><path d="M1.2 1v7.5L5 4.75z" fill="none" stroke="#b4b4b4" stroke-width="1"/></svg>
<div class="a" style="left:99px;top:665px;width:107px;height:25px;background:#fff;border-bottom:2px solid #007440;border-left:1px solid #c6c6c6;border-right:1px solid #c6c6c6"></div>
<div class="t" style="left:112px;top:671px;font-size:12.8px;font-weight:bold;color:#007440">microexcel.ru</div>
<svg class="a" style="left:239px;top:670px" width="17" height="17"><circle cx="8.5" cy="8.5" r="7.5" fill="none" stroke="#888" stroke-width="1.2"/><path d="M8.5 4v9M4 8.5h9" stroke="#888" stroke-width="1.4"/></svg>
<div class="a" style="left:643px;top:674px;width:2px;height:2px;background:#b0b0b0"></div>
<div class="a" style="left:643px;top:678px;width:2px;height:2px;background:#b0b0b0"></div>
<div class="a" style="left:643px;top:682px;width:2px;height:2px;background:#b0b0b0"></div>
<div class="a" style="left:660px;top:672px;width:15px;height:15px;border:1px solid #c6c6c6;background:#fff"></div>
<svg class="a" style="left:665px;top:676px" width="5" height="8"><path d="M4.5 0v7.5L0.5 3.75z" fill="#777"/></svg>
<div class="a" style="left:675px;top:672px;width:316px;height:15px;border:1px solid #c6c6c6;background:#fff"></div>
<div class="a" style="left:991px;top:672px;width:46px;height:15px;background:#d9d9d9"></div>
<div class="a" style="left:1038px;top:672px;width:15px;height:15px;border:1px solid #c6c6c6;background:#fff"></div>
<svg class="a" style="left:1043px;top:676px" width="5" height="8"><path d="M0.5 0v7.5L4.5 3.75z" fill="#777"/></svg>

<!-- status bar -->
<div class="a" style="left:0;top:694px;width:1072px;height:20px;background:#f3f3f3"></div>
<svg class="a" style="left:7px;top:697px" width="15" height="14" viewBox="0 0 15 14"><rect x="1.6" y="3.6" width="11.3" height="9.3" fill="#fff" stroke="#2b4a57" stroke-width="1.3"/><rect x="7" y="1" width="6" height="3" fill="#2b4a57"/><path d="M3.5 6.5h1.5M6.5 6.5h1.5M9.5 6.5h1.5M3.5 8.5h1.5M6.5 8.5h1.5M9.5 8.5h1.5M3.5 10.8h1.5M6.5 10.8h1.5M9.5 10.8h1.5" stroke="#2b4a57" stroke-width="1.1"/><circle cx="3" cy="3" r="2.7" fill="#2f5563" stroke="#8a7560" stroke-width="0.6"/></svg>
<div class="a" style="left:772px;top:694px;width:38px;height:20px;background:#d0d0d0"></div>
<svg class="a" style="left:784px;top:697px" width="14" height="13"><rect x="0.5" y="0.5" width="12" height="12" fill="none" stroke="#666"/><path d="M4.5 0.5v12M8.5 0.5v12M0.5 4.5h12M0.5 8.5h12" stroke="#666"/></svg>
<svg class="a" style="left:822px;top:697px" width="15" height="14"><rect x="0.5" y="0.5" width="13" height="12" fill="none" stroke="#666"/><rect x="3" y="2.5" width="8" height="8" fill="none" stroke="#666"/><path d="M4.5 5h5M4.5 7h5M4.5 9h5" stroke="#666" stroke-width="0.8"/></svg>
<svg class="a" style="left:860px;top:697px" width="15" height="14"><path d="M0.5 0.5h13v12h-13zM0.5 8.5h13M5.5 0.5v8M9.5 0.5v4h-4" fill="none" stroke="#6a6a6a"/></svg>
<div class="a" style="left:891px;top:703px;width:6px;height:2px;background:#555"></div>
<div class="a" style="left:901px;top:704px;width:100px;height:1px;background:#a6a6a6"></div>
<div class="a" style="left:949px;top:698px;width:5px;height:11px;background:#666"></div>
<svg class="a" style="left:1004px;top:700px" width="8" height="8"><path d="M4 0v8M0 4h8" stroke="#555" stroke-width="1.5"/></svg>
<div class="t" style="left:1024px;top:697px;font-size:11.5px;letter-spacing:-0.5px;color:#333">100 %</div>

<!-- red annotations -->
<svg class="a" style="left:0;top:0" width="1072" height="714" viewBox="0 0 1072 714">
<g fill="none" stroke="#ff0000" stroke-width="3.5">
<rect x="362.5" y="346.5" width="123" height="23" rx="8"/>
<rect x="362.5" y="472.5" width="123" height="23" rx="8"/>
<rect x="362.5" y="598.5" width="123" height="23" rx="8"/>
</g>
<g fill="#ff0000">
<path d="M49 360L84 353L76 362L159 369L159 373L76 365L83 373Z"/>
<path d="M49 486L84 479L76 488L159 495L159 499L76 491L83 499Z"/>
<path d="M49 612L84 605L76 614L159 621L159 625L76 617L83 625Z"/>
</g>
</svg>
</body></html>
